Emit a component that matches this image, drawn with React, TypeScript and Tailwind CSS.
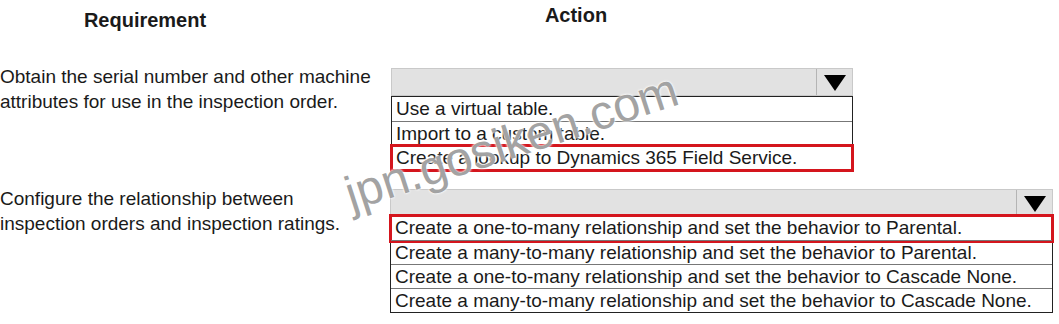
const first = ["Use a virtual table.", "Import to a custom table.", "Create a lookup to Dynamics 365 Field Service."];
const second = [
  "Create a one-to-many relationship and set the behavior to Parental.",
  "Create a many-to-many relationship and set the behavior to Parental.",
  "Create a one-to-many relationship and set the behavior to Cascade None.",
  "Create a many-to-many relationship and set the behavior to Cascade None.",
];

function Arrow() {
  return (
    <svg width="22" height="16" viewBox="0 0 22 16" className="mt-[3px]">
      <polygon points="0,0 22,0 11,16" fill="#000" />
    </svg>
  );
}

function Dropdown({ options, selected, width, headerH }: { options: string[]; selected: number; width: string; headerH: string }) {
  return (
    <div className={width}>
      <div className={`${headerH} flex justify-end border border-[#c9c9c9] bg-[#e2e2e2]`}>
        <div className="flex w-[36px] items-start justify-center border-l border-[#b4b4b4] pt-[3px]">
          <Arrow />
        </div>
      </div>
      <div className="border border-[#222]">
        {options.map((o, i) => (
          <div
            key={o}
            className={`relative h-[24px] whitespace-nowrap px-[4px] text-[19px] leading-[24px] ${i > 0 ? "border-t border-[#777]" : ""}`}
          >
            {o}
            {i === selected && (
              <div className="absolute -inset-x-[2px] -top-[2px] -bottom-[3px] border-[3px] border-[#d4151d]" />
            )}
          </div>
        ))}
      </div>
    </div>
  );
}

export default function App() {
  return (
    <div className="relative h-[324px] w-[1059px] overflow-hidden bg-white font-['Liberation_Sans',Arial,sans-serif] text-[#1a1a1a]">
      {/* column titles */}
      <div className="flex h-[64px] text-[20px] font-bold leading-[23px]">
        <div className="w-[290px] pt-[9px] text-center">Requirement</div>
        <div className="ml-[226px] w-[120px] pt-[4px] text-center">Action</div>
      </div>

      <div className="flex h-[122px]">
        <div className="w-[390px] whitespace-nowrap text-[19px] leading-[25px]">
          Obtain the serial number and other machine
          <br />
          attributes for use in the inspection order.
        </div>
        <div className="ml-[1px] mt-[4px]">
          <Dropdown options={first} selected={2} width="w-[462px]" headerH="h-[28px]" />
        </div>
      </div>

      <div className="flex">
        <div className="w-[390px] whitespace-nowrap text-[19px] leading-[25px]">
          Configure the relationship between
          <br />
          inspection orders and inspection ratings.
        </div>
        <div className="mt-[3px]">
          <Dropdown options={second} selected={0} width="w-[663px]" headerH="h-[26px]" />
        </div>
      </div>

      {/* watermark */}
      <div className="pointer-events-none absolute left-[338px] top-[118px] -rotate-[18deg] whitespace-nowrap text-[48px] leading-[48px] text-[#8a8a8a]/80 [text-shadow:0_0_3px_#fff,0_0_2px_#fff]">
        jpn.gosiken.com
      </div>
    </div>
  );
}
